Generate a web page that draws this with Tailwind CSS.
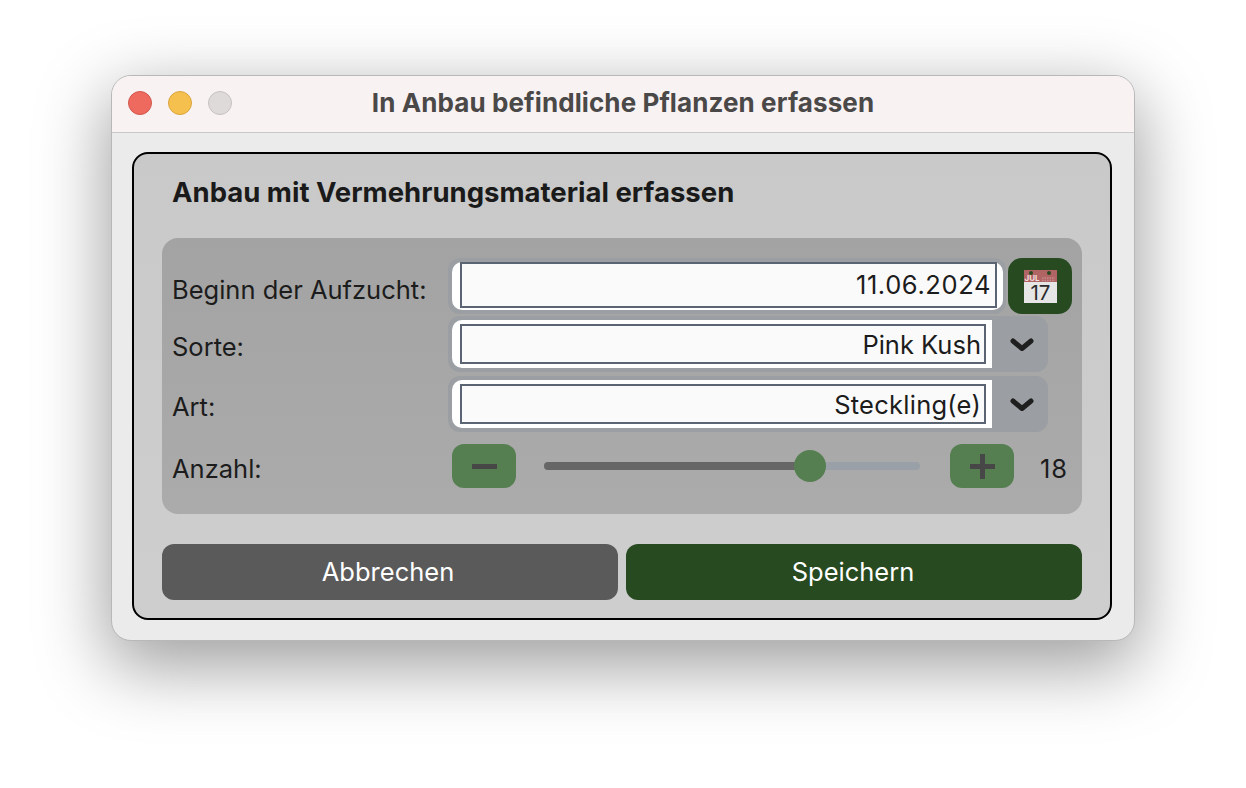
<!DOCTYPE html>
<html lang="de">
<head>
  <meta charset="UTF-8">
  <title>In Anbau befindliche Pflanzen erfassen</title>
  <script src="https://cdn.jsdelivr.net/npm/@tailwindcss/browser@4"></script>
</head>
<body class="bg-white h-[788px] w-[1246px] overflow-hidden pt-[75px] pl-[111px] font-['Inter',sans-serif] text-[#1c1c1c]">

  <div class="w-[1024px] h-[566px] rounded-[20px] border border-[#b8b8b8] bg-[#ebebeb] overflow-hidden shadow-[0_22px_70px_4px_rgba(0,0,0,0.38)]">
    <!-- title bar -->
    <div class="relative h-[57px] bg-[#f8f2f3] border-b border-[#c9c9c9] flex items-center justify-center">
      <div class="absolute left-4 top-[15px] flex gap-4">
        <span class="w-6 h-6 rounded-full bg-[#ee6a5f] border border-[#d0574d]"></span>
        <span class="w-6 h-6 rounded-full bg-[#f6c04f] border border-[#d9a53c]"></span>
        <span class="w-6 h-6 rounded-full bg-[#dfdada] border border-[#c6c1c1]"></span>
      </div>
      <h1 class="text-[26px] font-bold text-[#4b4848] tracking-[0.1px] -mt-[3px]">In Anbau befindliche Pflanzen erfassen</h1>
    </div>

    <!-- card -->
    <div class="ml-5 mr-[22px] mt-[19px] h-[468px] rounded-[16px] border-2 border-black bg-linear-to-b from-[#c9c9c9] to-[#cecece] px-7 flex flex-col">
      <h2 class="ml-[10px] mt-[21px] h-[34px] text-[27.5px] leading-[34px] font-bold text-[#1a1a1a] whitespace-nowrap">Anbau mit Vermehrungsmaterial erfassen</h2>

      <div class="mt-[29px] h-[276px] rounded-[16px] bg-linear-to-b from-[#a3a3a3] to-[#ababab] pl-[10px] pt-5 text-[25.5px]">
        <!-- Beginn der Aufzucht -->
        <div class="flex items-center h-14">
          <span class="w-[276px] pt-2">Beginn der Aufzucht:</span>
          <div class="w-[558px] h-14 rounded-[12px] bg-[#9b9ea2] pl-1 pr-[3px] py-1">
            <div class="h-12 rounded-[10px] bg-white pl-2 pr-[6px]">
              <div class="h-[46px] border-2 border-[#5a6473] bg-[#fafafa] flex items-center justify-end pr-1 tracking-[0.6px]">11.06.2024</div>
            </div>
          </div>
          <button class="ml-[2px] w-16 h-14 rounded-[14px] bg-[#284a20] flex items-center justify-center">
            <svg class="overflow-visible" width="33" height="33" viewBox="0 0 33 33">
              <rect x="0" y="0" width="33" height="33" fill="#e6e6e6"/>
              <rect x="0" y="0" width="33" height="12" fill="#b06464"/>
              <circle cx="7" cy="3" r="2" fill="#284a20"/>
              <circle cx="25" cy="3" r="2" fill="#284a20"/>
              <text x="8" y="11" font-family="Inter" font-size="8" font-weight="700" fill="#f1dede" text-anchor="middle">JUL</text>
              <path d="M18 8h13M18 10.5h13" stroke="#c58a8a" stroke-width="1.4" stroke-dasharray="1.5 1"/>
              <text x="16.5" y="30" font-family="Inter" font-size="20.5" font-weight="400" fill="#2c2c2c" text-anchor="middle">17</text>
            </svg>
          </button>
        </div>

        <!-- Sorte -->
        <div class="mt-[2px] flex items-center h-14">
          <span class="w-[276px] pt-[6px]">Sorte:</span>
          <div class="w-[600px] h-14 rounded-[12px] bg-[#9b9ea2] flex items-center pl-1">
            <div class="w-[540px] h-12 rounded-l-[10px] bg-white pl-2 pr-[6px] py-1">
              <div class="h-10 border-2 border-[#5a6473] bg-[#fafafa] flex items-center justify-end pr-[3px] pt-[2px]">Pink Kush</div>
            </div>
            <div class="w-[56px] flex justify-center pl-1 pt-[2px]">
              <svg width="26" height="16" viewBox="0 0 26 16" fill="none"><path d="M4 4l9 7.5L22 4" stroke="#1f1f1f" stroke-width="5" stroke-linecap="round" stroke-linejoin="round"/></svg>
            </div>
          </div>
        </div>

        <!-- Art -->
        <div class="mt-1 flex items-center h-14">
          <span class="w-[276px] pt-[6px]">Art:</span>
          <div class="w-[600px] h-14 rounded-[12px] bg-[#9b9ea2] flex items-center pl-1">
            <div class="w-[540px] h-12 rounded-l-[10px] bg-white pl-2 pr-[6px] py-1">
              <div class="h-10 border-2 border-[#5a6473] bg-[#fafafa] flex items-center justify-end pr-[3px] pt-[2px] tracking-[0.25px]">Steckling(e)</div>
            </div>
            <div class="w-[56px] flex justify-center pl-1 pt-[2px]">
              <svg width="26" height="16" viewBox="0 0 26 16" fill="none"><path d="M4 4l9 7.5L22 4" stroke="#1f1f1f" stroke-width="5" stroke-linecap="round" stroke-linejoin="round"/></svg>
            </div>
          </div>
        </div>

        <!-- Anzahl -->
        <div class="mt-3 flex items-center h-11">
          <span class="w-[280px] pt-[6px]">Anzahl:</span>
          <button class="w-16 h-11 rounded-[12px] bg-[#557f51] flex items-center justify-center">
            <span class="w-[25px] h-[5px] bg-[#474747]"></span>
          </button>
          <div class="relative ml-7 w-[376px] h-2 -mt-[1px] rounded-full bg-[#9aa0a8]">
            <div class="h-2 w-[265px] rounded-l-full bg-[#666666]"></div>
            <div class="absolute left-[250px] -top-3 w-8 h-8 rounded-full bg-[#557f51]"></div>
          </div>
          <button class="ml-[30px] w-16 h-11 rounded-[12px] bg-[#557f51] flex items-center justify-center">
            <svg width="25" height="25" viewBox="0 0 25 25"><path d="M0 10h10V0h5v10h10v5H15v10h-5V15H0z" fill="#474747"/></svg>
          </button>
          <span class="ml-[26px] pt-[6px] tracking-[1px]">18</span>
        </div>
      </div>

      <div class="mt-[30px] flex gap-2 text-[25.5px] text-white">
        <button class="w-[456px] h-14 rounded-[12px] bg-[#5a5a5a] pr-1">Abbrechen</button>
        <button class="w-[456px] h-14 rounded-[12px] bg-[#284a20] pr-[2px]">Speichern</button>
      </div>
    </div>
  </div>

</body>
</html>
